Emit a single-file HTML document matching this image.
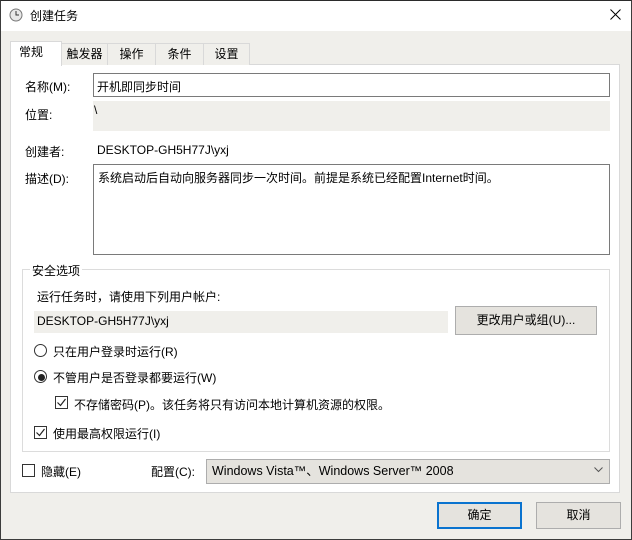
<!DOCTYPE html>
<html><head><meta charset="utf-8"><style>
*{box-sizing:border-box;margin:0;padding:0}
body{width:632px;height:540px;overflow:hidden;background:#f0efeb;font-family:"Liberation Sans","Noto Sans CJK SC",sans-serif;font-size:12px;color:#000;position:relative}
.a{position:absolute;white-space:nowrap}
#win{position:absolute;left:0;top:0;width:632px;height:540px;border:1px solid #3c3c3c;border-top-color:#2b2b2b}
#title{position:absolute;left:0;top:0;width:632px;height:31px;background:#fff;border-top:1px solid #2b2b2b;border-right:1px solid #3c3c3c;border-left:1px solid #3c3c3c}
#panel{position:absolute;left:10px;top:64px;width:610px;height:429px;background:#fff;border:1px solid #d9d9d9}
.tab{position:absolute;top:43px;height:22px;border:1px solid #d9d9d9;border-bottom:none;background:#f0efeb;text-align:center;line-height:20px}
.inp{position:absolute;background:#fff;border:1px solid #7a7a7a}
.gray{position:absolute;background:#f0efeb}
.btn{position:absolute;background:#e5e3de;border:1px solid #adadad;text-align:center}
.chk{position:absolute;width:13px;height:13px;border:1px solid #333;background:#fff}
.rad{position:absolute;width:13px;height:13px;border:1px solid #333;border-radius:50%;background:#fff}
</style></head><body>
<div id="title"></div>
<svg class="a" style="left:9px;top:8px" width="14" height="14" viewBox="0 0 14 14"><circle cx="7" cy="7" r="6" fill="#e8e8e8" stroke="#777"/><path d="M7 3v4h3" stroke="#333" fill="none"/></svg>
<div class="a" style="left:30px;top:7px;font-size:12px">创建任务</div>
<svg class="a" style="left:610px;top:9px" width="11" height="11" viewBox="0 0 11 11"><path d="M0.5 0.5l10 10M10.5 0.5l-10 10" stroke="#000" stroke-width="1"/></svg>
<div id="panel"></div>
<div class="tab" style="left:61px;width:47px">触发器</div>
<div class="tab" style="left:107px;width:49px">操作</div>
<div class="tab" style="left:155px;width:49px">条件</div>
<div class="tab" style="left:203px;width:47px">设置</div>
<div class="tab" style="left:10px;top:41px;width:52px;height:25px;background:#fff;text-align:left;padding-left:8px">常规</div>

<div class="a" style="left:25px;top:78px">名称(M):</div>
<div class="inp" style="left:93px;top:73px;width:517px;height:24px"></div>
<div class="a" style="left:97px;top:78px">开机即同步时间</div>
<div class="a" style="left:25px;top:106px">位置:</div>
<div class="gray" style="left:93px;top:101px;width:517px;height:30px"></div>
<div class="a" style="left:94px;top:103px">\</div>
<div class="a" style="left:25px;top:143px">创建者:</div>
<div class="a" style="left:97px;top:143px">DESKTOP-GH5H77J\yxj</div>
<div class="a" style="left:25px;top:170px">描述(D):</div>
<div class="inp" style="left:93px;top:164px;width:517px;height:91px"></div>
<div class="a" style="left:98px;top:169px">系统启动后自动向服务器同步一次时间。前提是系统已经配置Internet时间。</div>

<div class="a" style="left:22px;top:269px;width:588px;height:183px;border:1px solid #dcdcdc"></div>
<div class="a" style="left:30px;top:262px;background:#fff;padding:0 2px">安全选项</div>
<div class="a" style="left:37px;top:288px">运行任务时，请使用下列用户帐户:</div>
<div class="gray" style="left:34px;top:311px;width:414px;height:22px"></div>
<div class="a" style="left:37px;top:314px">DESKTOP-GH5H77J\yxj</div>
<div class="btn" style="left:455px;top:306px;width:142px;height:29px;line-height:27px">更改用户或组(U)...</div>
<div class="rad" style="left:34px;top:344px"></div>
<div class="a" style="left:53px;top:343px">只在用户登录时运行(R)</div>
<div class="rad" style="left:34px;top:370px"></div>
<div class="a" style="left:38px;top:374px;width:7px;height:7px;border-radius:50%;background:#222"></div>
<div class="a" style="left:53px;top:369px">不管用户是否登录都要运行(W)</div>
<div class="chk" style="left:55px;top:396px"></div>
<svg class="a" style="left:56px;top:397px" width="11" height="11"><path d="M1.5 5.5l3 3 5-6.5" stroke="#222" fill="none" stroke-width="1.2"/></svg>
<div class="a" style="left:74px;top:396px">不存储密码(P)。该任务将只有访问本地计算机资源的权限。</div>
<div class="chk" style="left:34px;top:426px"></div>
<svg class="a" style="left:35px;top:427px" width="11" height="11"><path d="M1.5 5.5l3 3 5-6.5" stroke="#222" fill="none" stroke-width="1.2"/></svg>
<div class="a" style="left:53px;top:425px">使用最高权限运行(I)</div>

<div class="chk" style="left:22px;top:464px"></div>
<div class="a" style="left:41px;top:463px">隐藏(E)</div>
<div class="a" style="left:151px;top:463px">配置(C):</div>
<div class="btn" style="left:206px;top:459px;width:404px;height:25px;text-align:left;padding-left:5px;line-height:23px;font-size:12.5px">Windows Vista™、Windows Server™ 2008</div>
<svg class="a" style="left:594px;top:467px" width="9" height="6"><path d="M0.5 0.5l4 4 4-4" stroke="#555" fill="none"/></svg>

<div class="btn" style="left:437px;top:502px;width:85px;height:27px;line-height:23px;border:2px solid #0a73cf">确定</div>
<div class="btn" style="left:536px;top:502px;width:85px;height:27px;line-height:25px">取消</div>
<div id="win"></div>
</body></html>
